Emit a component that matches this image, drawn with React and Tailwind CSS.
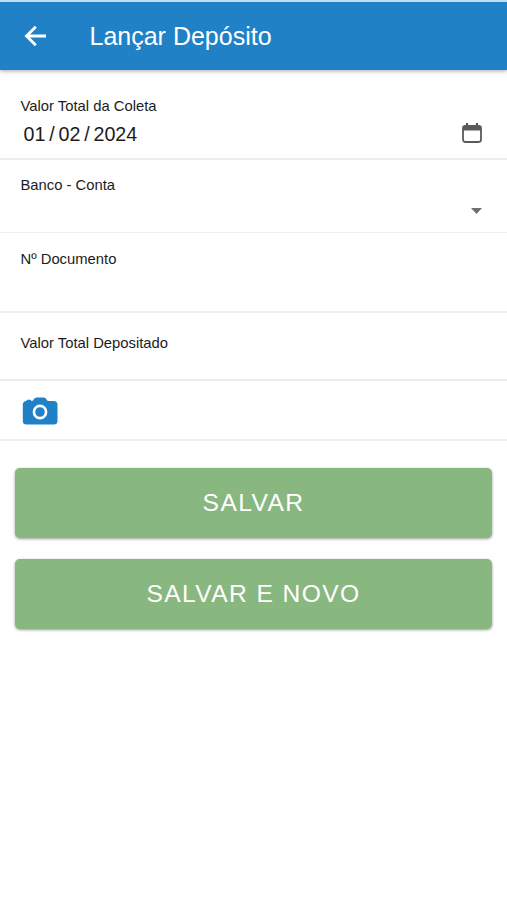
function BackIcon() {
  return (
    <svg className="w-[22px] h-[22px]" viewBox="0 0 22 22" fill="none" stroke="currentColor" strokeWidth="2.8">
      <path d="M22 11H2.5M11.8 1.8L2.5 11l9.3 9.2" />
    </svg>
  );
}

function CalendarIcon() {
  return (
    <svg className="w-5 h-5" viewBox="0 0 20 20" fill="none">
      <rect x="1" y="3" width="18" height="16" rx="2.4" stroke="#5a5a5a" strokeWidth="1.8" />
      <path d="M1 7.5V5a2 2 0 0 1 2-2h14a2 2 0 0 1 2 2v2.5z" fill="#5a5a5a" />
      <path d="M5 0v4M15 0v4" stroke="#5a5a5a" strokeWidth="2.2" />
    </svg>
  );
}

function CameraIcon() {
  return (
    <svg className="w-9 h-7" viewBox="0 0 36 28">
      <path
        d="M4.5 3.9C4.5 3.2 5 2.8 5.7 2.8H8c.8 0 1.2.4 1.3 1.1h.7c.8 0 1.2-.5 1.6-1.2C12.5 1.2 13.2.4 14.7.4h6.9c1.5 0 2.2.8 3.1 2.3.5.8.9 1.2 1.7 1.2h5.3c2.4 0 3.8 1.400 3.8 3.700V24c0 2.300-1.400 3.600-3.800 3.600H4.600C2.200 27.600.8 26.300.8 24V7.600c0-2.300 1.400-3.600 3.700-3.700z"
        fill="#2181c6"
      />
      <circle cx="18" cy="15" r="6.1" fill="none" stroke="#fff" strokeWidth="2.6" />
    </svg>
  );
}

function Field({ label, className, children }) {
  return (
    <div className={`border-[#ededed] px-[20.5px] ${className}`}>
      <label className="block text-[14.8px] leading-[18px] text-[#1c1c1c]">{label}</label>
      {children}
    </div>
  );
}

function ActionButton({ children }) {
  return (
    <button className="h-[70px] w-full rounded-[5px] bg-[#89b780] text-[24.6px] tracking-[1.4px] text-white shadow-[0_1px_3px_rgba(0,0,0,0.4)]">
      {children}
    </button>
  );
}

export default function App() {
  return (
    <div className="min-h-screen bg-white font-['Liberation_Sans',Arial,sans-serif]">
      <header className="flex h-[70px] items-center border-t-2 border-[#c5dced] bg-[#2181c6] pl-6 text-white shadow-[0_1px_4px_rgba(0,0,0,0.35)]">
        <BackIcon />
        <h1 className="ml-[43.5px] text-[25px] leading-7">Lançar Depósito</h1>
      </header>

      <main>
        <Field label="Valor Total da Coleta" className="h-[90px] border-b-2 pt-[27px]">
          <div className="flex items-center justify-between pl-[3px] pr-[5px] pt-[7px]">
            <div className="flex gap-[3.8px] text-[19.7px] leading-6 text-[#1c1c1c]">
              <span>01</span>
              <span>/</span>
              <span>02</span>
              <span>/</span>
              <span>2024</span>
            </div>
            <div className="-mt-[2px]">
              <CalendarIcon />
            </div>
          </div>
        </Field>

        <Field label="Banco - Conta" className="h-[73px] border-b pt-4">
          <div className="flex justify-end pr-[5px] pt-[14px]">
            <svg className="h-[6px] w-[11px]" viewBox="0 0 11 6">
              <path d="M0 0h11L5.5 6z" fill="#707070" />
            </svg>
          </div>
        </Field>

        <Field label="Nº Documento" className="h-[80px] border-b-2 pt-[17px]" />

        <Field label="Valor Total Depositado" className="h-[68px] border-b-2 pt-[21px]" />

        <div className="h-[60px] border-b-2 border-[#ededed] pl-[22px] pt-4">
          <CameraIcon />
        </div>

        <div className="flex flex-col gap-[21px] px-[15px] pt-[27px]">
          <ActionButton>SALVAR</ActionButton>
          <ActionButton>SALVAR E NOVO</ActionButton>
        </div>
      </main>
    </div>
  );
}
